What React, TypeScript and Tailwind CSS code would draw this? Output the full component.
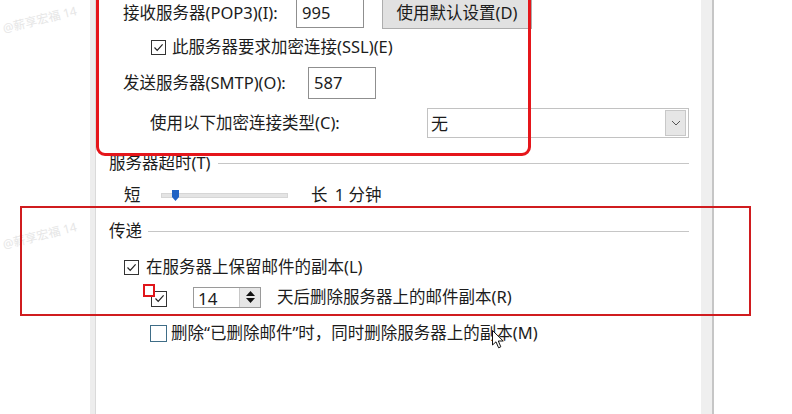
import React from "react";

const font = { fontFamily: '"Noto Sans", "Noto Sans CJK SC", sans-serif' };

function Check({ checked, className = "" }: { checked?: boolean; className?: string }) {
  return (
    <div className={`flex h-[15px] w-[15px] shrink-0 items-center justify-center border border-[#333] bg-white ${className}`}>
      {checked && (
        <svg width="11" height="11" viewBox="0 0 11 11">
          <polyline points="1.5,5.5 4.2,8.3 9.6,2.3" fill="none" stroke="#222" strokeWidth="1.2" />
        </svg>
      )}
    </div>
  );
}

export default function App() {
  return (
    <div className="relative flex h-[414px] w-[792px] overflow-hidden bg-white text-[16.5px] leading-none text-[#1c1c1c]" style={font}>
      {/* left outside area */}
      <div className="relative w-[90px] shrink-0 bg-white">
        <div className="absolute left-[2px] top-[14px] -rotate-[14deg] whitespace-nowrap text-[12px] text-[#e6e6e6]">@薪享宏福 14</div>
        <div className="absolute left-[2px] top-[230px] -rotate-[14deg] whitespace-nowrap text-[12px] text-[#e6e6e6]">@薪享宏福 14</div>
      </div>
      <div className="w-[6px] shrink-0 border-r border-[#dadada] bg-[#ededed]" />

      {/* dialog content */}
      <div className="flex w-[605px] shrink-0 flex-col bg-white pr-[12px]">
        {/* Row 1 */}
        <div className="mt-[-4px] flex h-[34px] items-center pl-[27px]">
          <span className="w-[173px]">接收服务器(POP3)(I):</span>
          <div className="flex h-[29px] w-[68px] items-center border border-[#8f8f8f] pl-[5px]">995</div>
          <div className="ml-[18px] flex h-[31px] w-[150px] items-center justify-center border border-[#adadad] bg-[#e1e1e1]">使用默认设置(D)</div>
        </div>
        {/* Row 2 */}
        <div className="flex h-[34px] items-center pl-[55px]">
          <Check checked />
          <span className="ml-[6px]">此服务器要求加密连接(SSL)(E)</span>
        </div>
        {/* Row 3 */}
        <div className="flex h-[38px] items-center pl-[27px]">
          <span className="w-[185px]">发送服务器(SMTP)(O):</span>
          <div className="flex h-[32px] w-[68px] items-center border border-[#8f8f8f] pl-[5px]">587</div>
        </div>
        {/* Row 4 */}
        <div className="flex h-[42px] items-center pl-[54px]">
          <span className="w-[278px]">使用以下加密连接类型(C):</span>
          <div className="flex h-[30px] w-[263px] items-center border border-[#c2c2c2] pl-[3px] pr-[2px]">
            <span className="flex-1 text-[17px]">无</span>
            <div className="flex h-[26px] w-[21px] items-center justify-center border border-[#c8c8c8] bg-[#e6e6e6]">
              <svg width="10" height="6" viewBox="0 0 10 6">
                <polyline points="1,1 5,5 9,1" fill="none" stroke="#555" strokeWidth="1" />
              </svg>
            </div>
          </div>
        </div>
        {/* Row 5 */}
        <div className="flex h-[38px] items-center pl-[13px]">
          <span>服务器超时(T)</span>
          <div className="ml-[7px] h-px flex-1 bg-[#c6c6c6]" />
        </div>
        {/* Row 6 */}
        <div className="flex h-[26px] items-center pl-[28px]">
          <span className="w-[37px]">短</span>
          <div className="relative h-[5px] w-[127px] border border-[#d6d6d6] bg-[#e4e4e4]">
            <svg className="absolute left-[10px] top-[-4px]" width="7" height="11" viewBox="0 0 7 11">
              <polygon points="0,0 7,0 7,7 3.5,11 0,7" fill="#1f62c4" />
            </svg>
          </div>
          <span className="ml-[23px]">长</span>
          <span className="ml-[3px]">&nbsp;1 分钟</span>
        </div>
        {/* Row 7 */}
        <div className="flex h-[46px] items-center pl-[13px]">
          <span>传递</span>
          <div className="ml-[6px] h-px flex-1 bg-[#c6c6c6]" />
        </div>
        {/* Row 8 */}
        <div className="flex h-[26px] items-center pl-[28px]">
          <Check checked />
          <span className="ml-[7px]">在服务器上保留邮件的副本(L)</span>
        </div>
        {/* Row 9 */}
        <div className="flex h-[34px] items-center pl-[55px]">
          <Check checked className="mt-[3px] h-[16px] w-[16px]" />
          <div className="ml-[26px] flex h-[21px] w-[68px] items-center border border-[#9a9a9a]">
            <span className="flex-1 pl-[4px] pt-[3px] text-[17px]">14</span>
            <div className="flex h-full w-[21px] flex-col items-center justify-center gap-[2px] border-l border-[#c8c8c8] bg-[#e6e6e6]">
              <svg width="9" height="5" viewBox="0 0 9 5"><polygon points="0,5 4.5,0 9,5" fill="#111" /></svg>
              <svg width="9" height="5" viewBox="0 0 9 5"><polygon points="0,0 9,0 4.5,5" fill="#111" /></svg>
            </div>
          </div>
          <span className="ml-[16px]">天后删除服务器上的邮件副本(R)</span>
        </div>
        {/* Row 10 */}
        <div className="flex h-[38px] items-center pl-[54px]">
          <div className="h-[17px] w-[17px] shrink-0 border border-[#3f6d87] bg-white" />
          <span className="ml-[4px]">删除“已删除邮件”时，同时删除服务器上的副本(M)</span>
        </div>
        <div className="flex-1" />
      </div>

      {/* right strip */}
      <div className="w-[13px] shrink-0 border-r-2 border-[#c6c6c6] bg-[#efefef]" />
      <div className="flex-1 bg-white" />

      {/* annotations */}
      <div className="pointer-events-none absolute left-[96px] top-[-12px] h-[168px] w-[435px] rounded-[9px] border-[3px] border-[#e5161b]" />
      <div className="pointer-events-none absolute left-[20px] top-[206px] h-[110px] w-[731px] border-2 border-[#d01c1f]" />
      <div className="pointer-events-none absolute left-[143px] top-[284px] h-[13px] w-[12px] border-2 border-[#e0161b] bg-white" />

      {/* cursor */}
      <svg className="pointer-events-none absolute left-[492px] top-[330px]" width="13" height="19" viewBox="0 0 13 19">
        <polygon points="0.5,0.5 0.5,15 4,11.8 6.6,17.8 8.8,16.8 6.3,11 11.2,11" fill="#fff" stroke="#111" strokeWidth="1" />
      </svg>
    </div>
  );
}
